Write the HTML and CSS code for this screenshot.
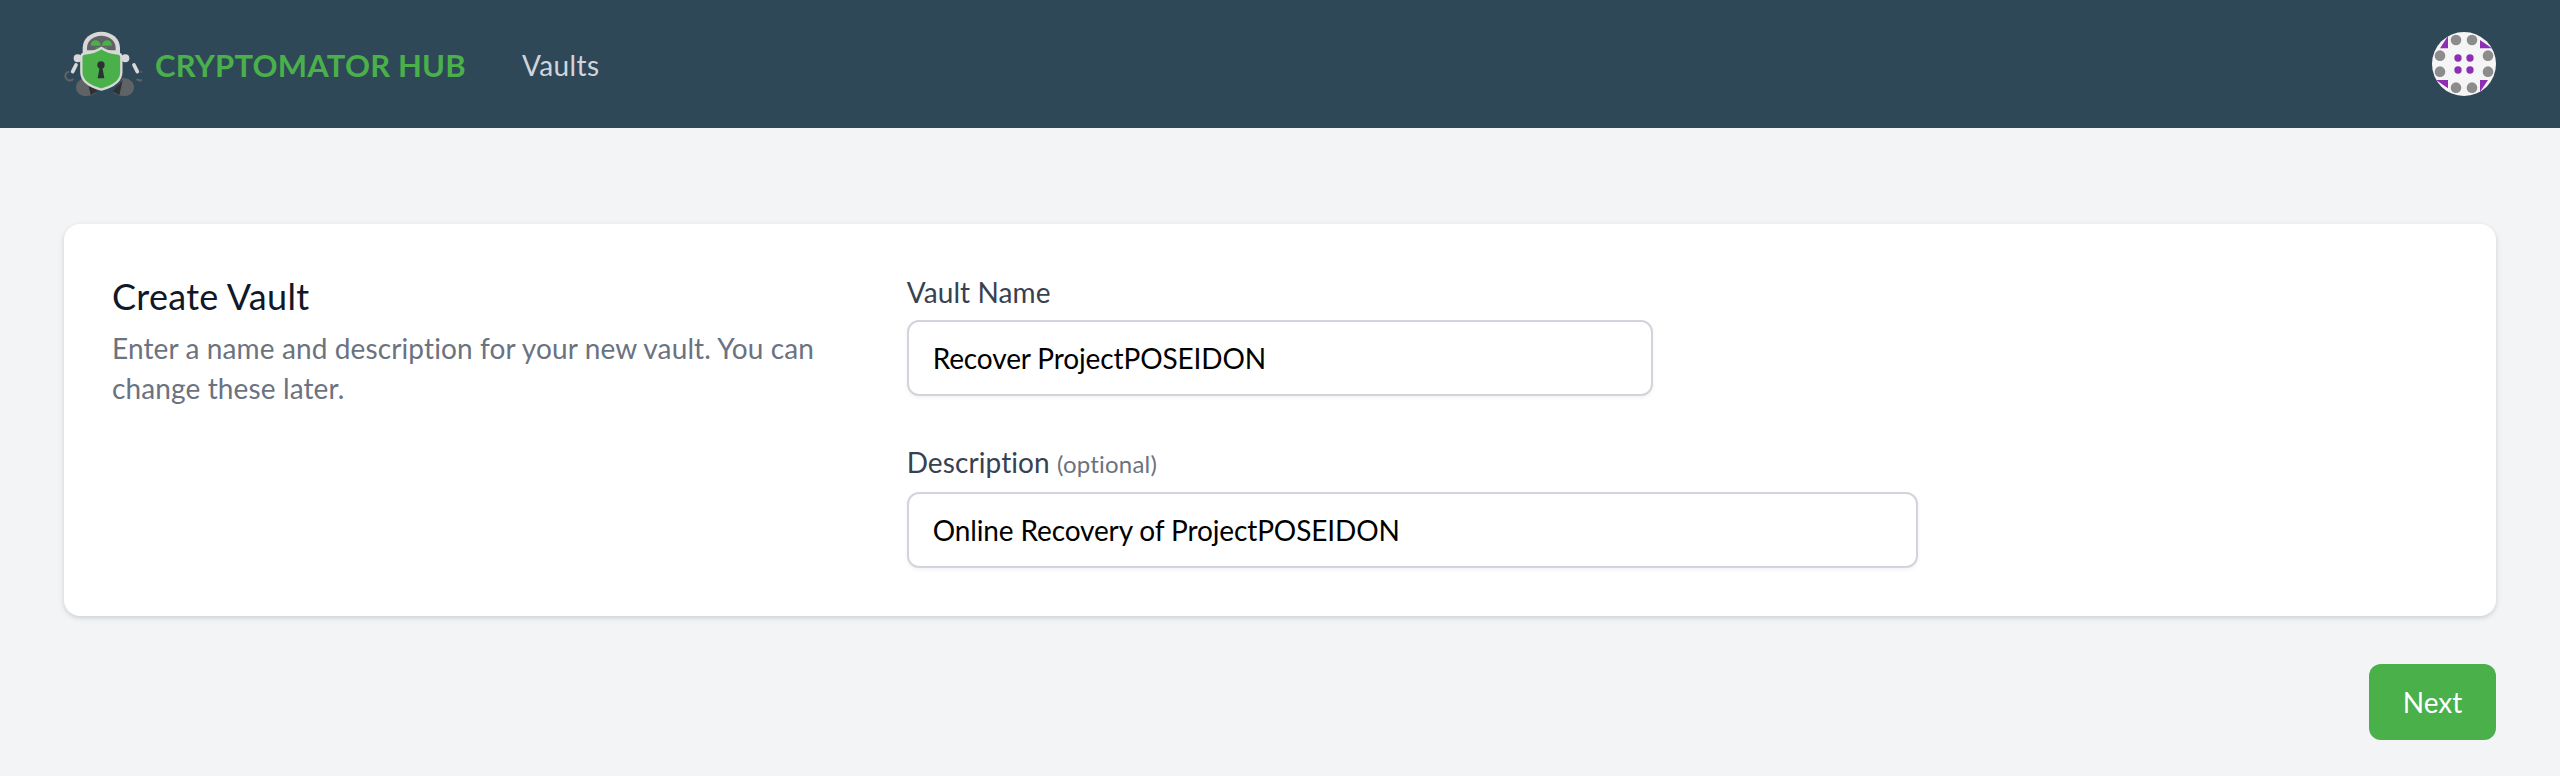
FILE: index.html
```html
<!DOCTYPE html>
<html lang="en">
<head>
<meta charset="utf-8">
<title>Cryptomator Hub</title>
<link rel="stylesheet" href="styles.css">
</head>
<body>
<header class="topbar">
  <div class="brand">
    <svg class="logo" viewBox="36 45 240 204" aria-hidden="true">
      <path d="M112 189c-22 0-34 14-34 28 0 12 8 24 24 26 14 1 30-2 38-12z" fill="#5f6366"/>
      <path d="M218 189c22 0 34 14 34 28 0 12-8 24-24 26-14 1-30-2-38-12z" fill="#5f6366"/>
      <path d="M112 195l10 46 20-12z" fill="#2e3134"/>
      <path d="M218 195l-10 46-20-12z" fill="#2e3134"/>
      <path d="M58 172a13 13 0 0 0-12 14 14 14 0 0 0 24 8M272 172a13 13 0 0 1 12 14 14 14 0 0 1-24 8" fill="none" stroke="#5f6366" stroke-width="6" transform="translate(0 -2)"/>
      <path d="M78 150l-10 20M252 150l10 20" stroke="#d8d8d8" stroke-width="11" stroke-linecap="round"/>
      <circle cx="83" cy="130" r="12" fill="#d8d8d8"/>
      <circle cx="226" cy="130" r="12" fill="#d8d8d8"/>
      <path d="M98 118v-20a56 48 0 0 1 112 0v20z" fill="#d8d8d8"/>
      <path d="M111 106v-8a43 36 0 0 1 86 0v8z" fill="#5f6366"/>
      <path d="M123 92a14 13 0 0 1 28-6l2 6zM185 92a14 13 0 0 0-28-6l-2 6z" fill="#49b04a"/>
      <path d="M137 99h34" stroke="#49b04a" stroke-width="4" stroke-dasharray="4 3"/>
      <path d="M94 126q0-9 9-10 30-3 51-17 21 14 51 17 9 1 9 10v46q0 36-60 52-60-16-60-52z" fill="#49b04a" stroke="#d8d8d8" stroke-width="7"/>
      <circle cx="153" cy="150" r="11" fill="#2e3134"/>
      <path d="M150 152h6l7 38h-20z" fill="#2e3134"/>
    </svg>
    <span class="brand-name">CRYPTOMATOR HUB</span>
    <a class="nav-link" href="#">Vaults</a>
  </div>
  <svg class="avatar" viewBox="66 36 192 192" aria-hidden="true">
    <circle cx="162" cy="132" r="96" fill="#f5f5f5"/>
    <g fill="#8e2fb3">
      <path d="M114 48v37H90z"/>
      <path d="M210 60l36 25h-36z"/>
      <path d="M78 180h36v25z"/>
      <path d="M210 180h24l-24 36z"/>
      <circle cx="144" cy="114" r="11"/>
      <circle cx="180" cy="114" r="11"/>
      <circle cx="144" cy="150" r="11"/>
      <circle cx="180" cy="150" r="11"/>
    </g>
    <g fill="#8c8c8c">
      <circle cx="138" cy="60" r="16"/>
      <circle cx="186" cy="60" r="16"/>
      <circle cx="90" cy="107" r="16"/>
      <circle cx="234" cy="107" r="16"/>
      <circle cx="90" cy="155" r="16"/>
      <circle cx="234" cy="155" r="16"/>
      <circle cx="138" cy="203" r="16"/>
      <circle cx="186" cy="203" r="16"/>
    </g>
  </svg>
</header>
<main class="page">
  <form class="card">
    <div class="intro">
      <h1 class="title">Create Vault</h1>
      <p class="hint">Enter a name and description for your new vault. You can change these later.</p>
    </div>
    <div class="fields">
      <label class="field">
        <span class="label">Vault Name</span>
        <input class="input input-name" type="text" value="Recover ProjectPOSEIDON">
      </label>
      <label class="field">
        <span class="label">Description <small class="optional">(optional)</small></span>
        <input class="input input-desc" type="text" value="Online Recovery of ProjectPOSEIDON">
      </label>
    </div>
  </form>
  <div class="actions">
    <button class="next" type="button">Next</button>
  </div>
</main>
</body>
</html>
```
FILE: styles.css
```css
* { box-sizing: border-box; }
html, body { margin: 0; height: 100%; }
body {
  background: #f3f4f6;
  font-family: Lato, "Noto Sans", sans-serif;
  overflow: hidden;
}
.topbar {
  height: 128px;
  background: #2f4858;
  display: flex;
  align-items: center;
  justify-content: space-between;
  padding: 0 64px 0 62px;
}
.brand { display: flex; align-items: center; }
.logo { width: 80px; height: 68px; margin-right: 13px; }
.brand-name { color: #49b04a; font-size: 31px; font-weight: 700; letter-spacing: .2px; padding-top: 1px; }
.nav-link { color: #d1d5db; font-size: 28px; letter-spacing: .4px; margin-left: 56px; padding-top: 2px; text-decoration: none; }
.avatar { width: 64px; height: 64px; }
.page { padding: 96px 64px 0; }
.card {
  background: #fff;
  border-radius: 16px;
  box-shadow: 0 2px 6px rgba(0,0,0,.1), 0 2px 4px rgba(0,0,0,.06);
  padding: 48px;
  height: 392px;
  display: grid;
  grid-template-columns: repeat(3, 1fr);
  column-gap: 48px;
}
.title { margin: 0 0 8px; font-size: 36px; line-height: 48px; font-weight: 400; letter-spacing: .3px; color: #111827; }
.hint { margin: 0; font-size: 28px; line-height: 40px; letter-spacing: .12px; color: #6b7280; }
.fields { grid-column: span 2; display: flex; flex-direction: column; gap: 46px; }
.field { display: flex; flex-direction: column; gap: 8px; }
.label { font-size: 28px; line-height: 40px; letter-spacing: .1px; color: #374151; }
.optional { font-size: 24px; letter-spacing: .2px; color: #6b7280; }
.input {
  height: 76px;
  border: 2px solid #d1d5db;
  border-radius: 12px;
  box-shadow: 0 2px 4px rgba(0,0,0,.05);
  padding: 0 24px;
  font: inherit;
  font-size: 28px;
  letter-spacing: -.12px;
  color: #000;
  background: #fff;
}
.input-name { width: 746px; }
.input-desc { width: 1011px; }
.actions { display: flex; justify-content: flex-end; margin-top: 48px; }
.next {
  width: 127px;
  height: 76px;
  border: 0;
  border-radius: 12px;
  background: #49b04a;
  color: #fff;
  font: inherit;
  font-size: 28px;
}
```
